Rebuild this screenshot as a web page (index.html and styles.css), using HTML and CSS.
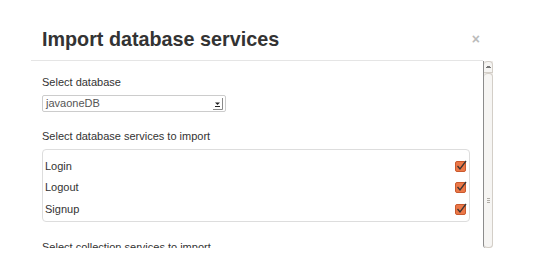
FILE: index.html
```html
<!DOCTYPE html>
<html>
<head>
	<meta charset="utf-8">
	<title>Import database services</title>
	<link rel="stylesheet" href="styles.css">
</head>
<body>

<div class="modal">
	<div class="modal-header">
		<h3>Import database services</h3>
		<span class="close">×</span>
	</div>

	<div class="modal-main">
		<div class="modal-body">
			<label class="field-label">Select database</label>
			<div class="select">
				<span>javaoneDB</span>
				<svg class="select-arrow" width="12" height="14" viewBox="0 0 12 14">
					<path d="M3 5.5h5l-2.5 2.5z" fill="#222"/>
					<path d="M3 9.5h5" stroke="#222" stroke-width="1"/>
					<path d="M10.5 1v11.5H1" stroke="#8a8a8a" stroke-width="1" fill="none"/>
				</svg>
			</div>

			<label class="field-label section">Select database services to import</label>
			<ul class="service-list">
				<li><span>Login</span><svg class="check" width="12" height="12" viewBox="0 0 12 12"><rect x="0.5" y="1.5" width="10" height="10" rx="1.5" fill="#ec7848" stroke="#c95a2e"/><path d="M2.5 6l2.5 3 6-8" stroke="#3b3433" stroke-width="1.3" fill="none"/></svg></li>
				<li><span>Logout</span><svg class="check" width="12" height="12" viewBox="0 0 12 12"><rect x="0.5" y="1.5" width="10" height="10" rx="1.5" fill="#ec7848" stroke="#c95a2e"/><path d="M2.5 6l2.5 3 6-8" stroke="#3b3433" stroke-width="1.3" fill="none"/></svg></li>
				<li><span>Signup</span><svg class="check" width="12" height="12" viewBox="0 0 12 12"><rect x="0.5" y="1.5" width="10" height="10" rx="1.5" fill="#ec7848" stroke="#c95a2e"/><path d="M2.5 6l2.5 3 6-8" stroke="#3b3433" stroke-width="1.3" fill="none"/></svg></li>
			</ul>

			<label class="field-label section">Select collection services to import</label>
		</div>

		<!-- scrollbar of the body, drawn by hand -->
		<div class="scrollbar">
			<div class="scroll-up"></div>
			<div class="scroll-thumb"><div class="grip"></div></div>
		</div>
	</div>
</div>

</body>
</html>
```

FILE: styles.css
```css
body {
	margin: 0;
	background-color: white;
	font-family: 'Liberation Sans', Arial, sans-serif;
	color: #333;
}

.modal {
	margin-left: 31px;
	width: 462px;
}

.modal-header {
	display: flex;
	justify-content: space-between;
	align-items: flex-start;
	margin-right: 10px;
	padding: 24px 3px 6px 11px;
	border-bottom: 1px solid #e5e5e5;
}
.modal-header h3 {
	margin: 0;
	font-size: 19.75px;
	line-height: 30px;
	font-weight: bold;
	color: #333;
}
.close {
	margin-top: 8px;
	font-size: 14px;
	line-height: 14px;
	font-weight: bold;
	color: #bbb;
}

.modal-main {
	display: flex;
	height: 187px;
}

.modal-body {
	flex: 1;
	overflow: hidden;
	padding: 13px 13px 0 11px;
	font-size: 11px;
}

.scrollbar {
	width: 10px;
	display: flex;
	flex-direction: column;
	box-sizing: border-box;
	border-left: 1px solid #8c8c8c;
	background-color: #efedea;
	border-radius: 0 0 3px 3px;
}
.scroll-up {
	height: 10px;
	border: 1px solid #d3cec7;
	border-left: none;
	border-radius: 4px 4px 0 0;
	background:
		linear-gradient(#777, #777) center 4px / 3px 1px no-repeat,
		linear-gradient(#777, #777) center 5px / 5px 1px no-repeat,
		#f6f5f3;
}
.scroll-thumb {
	flex: 1;
	border: 1px solid #d3cec7;
	border-left: none;
	border-radius: 4px;
	background-color: #f6f5f3;
	padding-top: 124px;
}
.grip {
	width: 3px;
	height: 5px;
	margin: 0 auto;
	background: repeating-linear-gradient(#b0aca6 0 1px, transparent 1px 2px);
}

.field-label {
	display: block;
	line-height: 16px;
	margin-bottom: 5px;
}
.field-label.section {
	margin-top: 16px;
}
.service-list + .field-label.section {
	margin-top: 17px;
}

.select {
	box-sizing: border-box;
	width: 184px;
	height: 17px;
	display: flex;
	justify-content: space-between;
	align-items: center;
	padding: 0 1px 0 3px;
	border: 1px solid #ccc;
	border-radius: 2px;
	line-height: 15px;
	color: #555;
}
.select-arrow {
	display: block;
}

.service-list {
	list-style: none;
	margin: 0;
	padding: 5px 0 1px;
	border: 1px solid #ddd;
	border-radius: 4px;
}
.service-list li {
	display: flex;
	justify-content: space-between;
	align-items: center;
	height: 21.5px;
	padding: 0 2px 0 2px;
}
.check {
	display: block;
}
```
